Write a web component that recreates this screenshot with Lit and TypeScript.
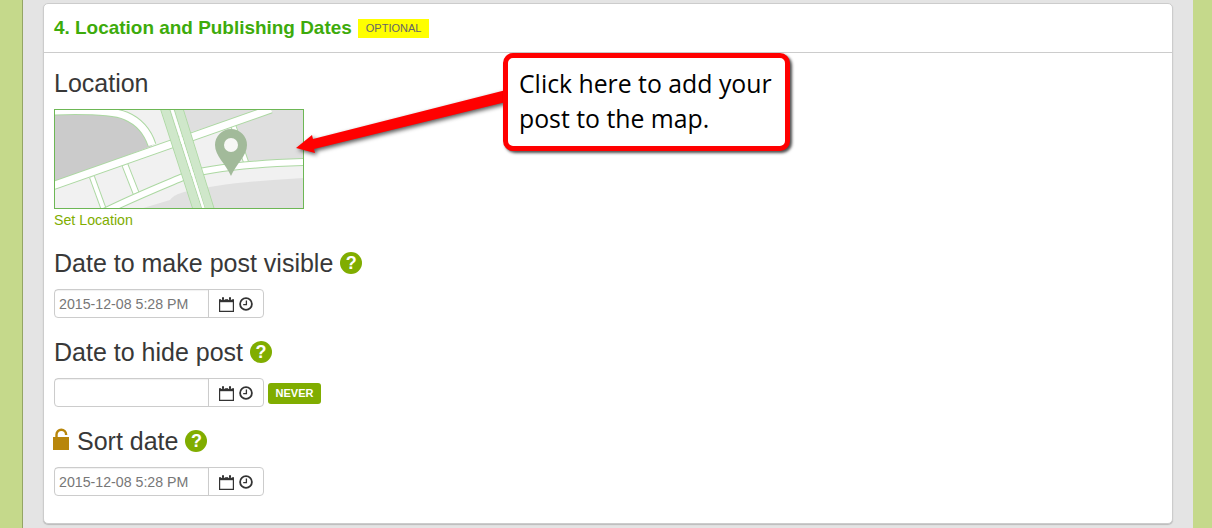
import { LitElement, html, css, svg } from "lit";
import { customElement } from "lit/decorators.js";

const calendar = html`<svg class="ico" width="15" height="15" viewBox="0 0 15 15"><path d="M.6 4h13.8v10.4H.6z" fill="none" stroke="#333" stroke-width="1.2"/><path d="M0 2.2h15v3H0z" fill="#333"/><path d="M3 2.6h2v-2.4h-2zM10 2.6h2v-2.4h-2z" fill="#333"/><path d="M2 1.6h.8v1.4H2zM5.3 1.6h.8v1.4h-.8zM9 1.6h.8v1.4H9zM12.3 1.6h.8v1.4h-.8z" fill="#fff"/></svg>`;
const clock = html`<svg class="ico" width="14" height="14" viewBox="0 0 14 14"><circle cx="7" cy="7" r="5.9" fill="none" stroke="#333" stroke-width="1.8"/><path d="M7.4 3.4v4.2H4.2" fill="none" stroke="#333" stroke-width="1.3"/></svg>`;

@customElement("app-root")
export class AppRoot extends LitElement {
  static styles = css`
    :host { display: block; height: 528px; overflow: hidden; font-family: "Liberation Sans", Arial, sans-serif; color: #333; position: relative; }
    .page { display: flex; height: 528px; background: #c5d98b; }
    .edge { width: 22px; flex: none; border-right: 1px solid #94a565; box-sizing: content-box; }
    .main { width: 1170px; flex: none; background: #e4e4e4; padding: 3px 20px 0 20px; box-sizing: border-box; }
    .card { background: #fff; border: 1px solid #ccc; border-radius: 5px; height: 521px; box-sizing: border-box; box-shadow: 0 1px 1px #bbb; }
    .head { height: 48px; border-bottom: 1px solid #ccc; display: flex; align-items: center; padding: 0 10px; box-sizing: content-box; }
    .head h2 { margin: 0; font-size: 18.95px; font-weight: 700; color: #3dab0b; line-height: 48px; }
    .opt { margin-left: 6px; background: #ff0; color: #666; font-size: 11px; height: 19px; line-height: 19px; padding: 0 8px; }
    .body { padding: 16px 10px 0; }
    .label { font-size: 25px; line-height: 28px; color: #383838; display: flex; align-items: center; height: 30px; padding-bottom: 2px; box-sizing: border-box; }
    .help { width: 22px; height: 22px; border-radius: 50%; background: #80ad00; color: #fff; font-weight: 700; font-size: 18px; line-height: 22px; text-align: center; margin-left: 7px; }
    .map { display: block; width: 250px; height: 100px; margin-top: 10px; box-sizing: border-box; border: 1px solid #6db755; }
    .map svg { display: block; }
    .link { font-size: 14.2px; line-height: 20px; color: #80ad00; margin-top: 1px; }
    .sec { margin-top: 20px; }
    .sec.first { margin-top: 19px; }
    .row { display: flex; align-items: center; margin-top: 10px; }
    .sec.sort { margin-top: 20px; }
    .field { display: flex; width: 210px; height: 29px; box-sizing: border-box; border: 1px solid #ccc; border-radius: 4px; }
    .val { width: 149px; border-right: 1px solid #ccc; font-size: 14.2px; line-height: 29px; height: 27px; color: #777; padding-left: 4px; box-sizing: content-box; box-shadow: inset 0 1px 1px rgba(0,0,0,.06); }
    .tools { flex: 1; display: flex; align-items: center; justify-content: flex-start; padding: 1px 0 0 10px; gap: 5px; }
    .ico { display: block; flex: none; }
    .never { margin: 2px 0 0 4px; background: #80ad00; color: #fff; font-size: 11px; font-weight: 700; height: 21px; line-height: 21px; width: 53px; text-align: center; border-radius: 3px; }
    .lock { margin-right: 7px; margin-left: -2px; margin-top: -4px; }
    .note { position: absolute; left: 503px; top: 53px; width: 287px; height: 98px; box-sizing: border-box; background: #fff; border: 5px solid #f00; border-radius: 10px; box-shadow: 2px 2px 3px rgba(0,0,0,.7); font-family: "Open Sans", sans-serif; font-size: 24.8px; line-height: 35px; color: #000; padding: 8px 0 0 11px; white-space: nowrap; }
    .arrow { position: absolute; left: 280px; top: 80px; overflow: visible; filter: drop-shadow(2px 2px 2px rgba(0,0,0,.65)); }
  `;

  private mapArt() {
    const road = (d: string, w = 6) => svg`<path d=${d} fill="none" stroke="#acd8a2" stroke-width=${w + 2}/><path d=${d} fill="none" stroke="#fff" stroke-width=${w}/>`;
    return html`<svg width="248" height="98" viewBox="1 1 248 98">
      <rect x="0" y="0" width="250" height="100" fill="#f1f1f1"/>
      <path d="M0 4C30 3 60 2 75 9C88 15 95 25 98 37L0 74Z" fill="#cbcbcb"/>
      <path d="M125 0H212L134 24Z" fill="#dfdfdf"/>
      <path d="M181 13L213 0H250V50L194 52Z" fill="#dfdfdf"/>
      <path d="M86 100L116 91C120 86 124 85 130 83C150 78 186 73 219 71L250 69V100Z" fill="#e0e0e0"/>
      ${road("M38 68L50 101", 4)}
      ${road("M71 56L82 84", 5)}
      ${road("M178 13L192 53", 4)}
      ${road("M-2 77L217 0", 7)}
      ${road("M-2 2C30 1 58 1 72 7C86 13 94 24 98 36", 7)}
      ${road("M50 103C80 88 110 76 129 68C150 60 186 55 252 53", 6)}
      <path d="M110.7 -1L143.7 101M124.3 -1L156 101" stroke="#acd8a2" stroke-width="9.6" fill="none"/>
      <path d="M110.7 -1L143.7 101M124.3 -1L156 101" stroke="#cfe7ca" stroke-width="8" fill="none"/>
      <path d="M117.5 -1L150 101" stroke="#fff" stroke-width="2.4" fill="none"/>
      <path d="M177 67C172 55 161 47 161 36A16 16 0 0 1 193 36C193 47 182 55 177 67Z" fill="#a2ba9a"/>
      <circle cx="177" cy="36" r="7" fill="#f7f7f5"/>
    </svg>`;
  }

  private field(v: string) {
    return html`<div class="field"><div class="val">${v}</div><div class="tools">${calendar}${clock}</div></div>`;
  }

  render() {
    return html`
      <div class="page">
        <div class="edge"></div>
        <div class="main">
          <div class="card">
            <div class="head"><h2>4. Location and Publishing Dates</h2><span class="opt">OPTIONAL</span></div>
            <div class="body">
              <div class="label">Location</div>
              <div class="map">${this.mapArt()}</div>
              <div class="link">Set Location</div>
              <div class="sec first">
                <div class="label">Date to make post visible<span class="help">?</span></div>
                <div class="row">${this.field("2015-12-08 5:28 PM")}</div>
              </div>
              <div class="sec">
                <div class="label">Date to hide post<span class="help">?</span></div>
                <div class="row">${this.field("")}<span class="never">NEVER</span></div>
              </div>
              <div class="sec sort">
                <div class="label"><svg class="ico lock" width="18" height="22" viewBox="0 0 18 22"><path d="M1 9h16v13H1z" fill="#b8860b" /><path d="M4.5 10V6.5a4.8 4.8 0 0 1 9.6 0V7" fill="none" stroke="#b8860b" stroke-width="2.4"/></svg>Sort date<span class="help">?</span></div>
                <div class="row">${this.field("2015-12-08 5:28 PM")}</div>
              </div>
            </div>
          </div>
        </div>
      </div>
      <svg class="arrow" width="230" height="80" viewBox="280 80 230 80"><path d="M506 90L313 139L312 135L296 148L315 153L314 149L506 102Z" fill="#f00"/></svg>
      <div class="note">Click here to add your<br />post to the map.</div>
    `;
  }
}
